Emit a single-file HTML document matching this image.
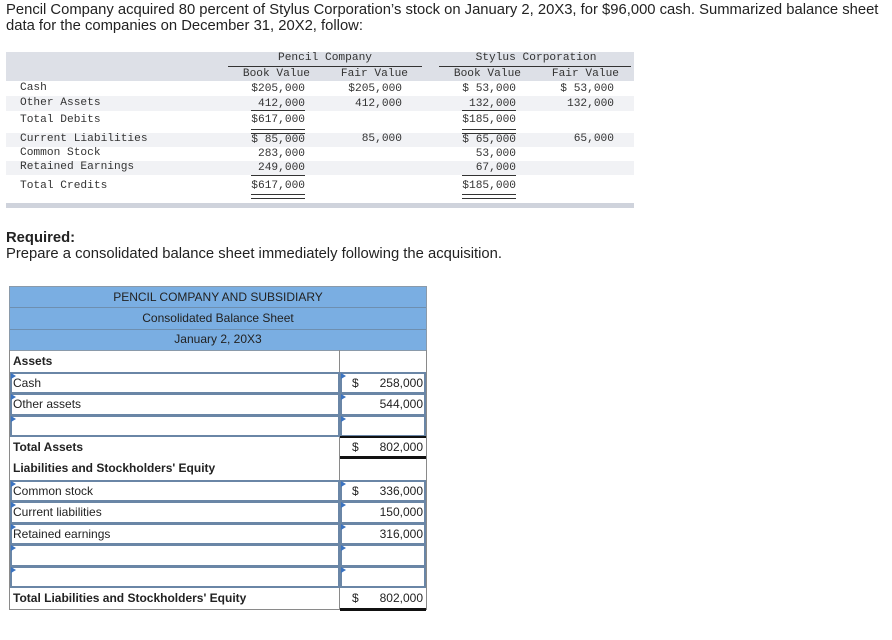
<!DOCTYPE html>
<html><head><style>
body{margin:0;width:892px;height:640px;background:#fff;position:relative;overflow:hidden;font-family:"Liberation Sans",Arial,sans-serif;color:#222}
.a{position:absolute;white-space:nowrap}
.m{font-family:"Liberation Mono",monospace;font-size:11.2px;color:#333}
.r{text-align:right}
.t{font-size:14.8px}
.b{font-size:12px}
.cell{position:absolute;box-sizing:border-box}
.inp{border:2px solid #6a86a6;background:#fff}
.tri{position:absolute;width:0;height:0;border-top:3px solid transparent;border-bottom:3px solid transparent;border-left:5px solid #3b73c0}
</style></head><body>
<div class="a t" style="left:6px;top:2px">Pencil Company acquired 80 percent of Stylus Corporation’s stock on January 2, 20X3, for $96,000 cash. Summarized balance sheet</div>
<div class="a t" style="left:6px;top:18px">data for the companies on December 31, 20X2, follow:</div>

<div class="a" style="left:6px;top:52px;width:628px;height:29px;background:#dde0e7"></div>
<div class="a" style="left:6px;top:96px;width:628px;height:15px;background:#f1f2f5"></div>
<div class="a" style="left:6px;top:133px;width:628px;height:14px;background:#f1f2f5"></div>
<div class="a" style="left:6px;top:161px;width:628px;height:14px;background:#f1f2f5"></div>
<div class="a" style="left:6px;top:203px;width:628px;height:5px;background:#cfd3dc"></div>
<div class="a m" style="left:228px;top:52px;width:194px;text-align:center">Pencil Company</div>
<div class="a m" style="left:439px;top:52px;width:194px;text-align:center">Stylus Corporation</div>
<div class="a" style="left:228px;top:66px;width:194px;height:1px;background:#333"></div>
<div class="a" style="left:439px;top:66px;width:192px;height:1px;background:#333"></div>
<div class="a m r" style="left:205px;width:105px;top:68px">Book Value</div>
<div class="a m r" style="left:303px;width:105px;top:68px">Fair Value</div>
<div class="a m r" style="left:416px;width:105px;top:68px">Book Value</div>
<div class="a m r" style="left:514px;width:105px;top:68px">Fair Value</div>

<div class="a m" style="left:20px;top:82px">Cash</div>
<div class="a m" style="left:20px;top:97px">Other Assets</div>
<div class="a m" style="left:20px;top:114px">Total Debits</div>
<div class="a m" style="left:20px;top:133px">Current Liabilities</div>
<div class="a m" style="left:20px;top:147px">Common Stock</div>
<div class="a m" style="left:20px;top:161px">Retained Earnings</div>
<div class="a m" style="left:20px;top:180px">Total Credits</div>

<div class="a m r" style="left:205px;width:100px;top:82px;line-height:15px">$205,000<br>412,000</div>
<div class="a m r" style="left:205px;width:100px;top:114px">$617,000</div>
<div class="a m r" style="left:205px;width:100px;top:133px;line-height:14px">$ 85,000<br>283,000<br>249,000</div>
<div class="a m r" style="left:205px;width:100px;top:180px">$617,000</div>
<div class="a m r" style="left:302px;width:100px;top:82px;line-height:15px">$205,000<br>412,000</div>
<div class="a m r" style="left:302px;width:100px;top:133px">85,000</div>
<div class="a m r" style="left:416px;width:100px;top:82px;line-height:15px">$ 53,000<br>132,000</div>
<div class="a m r" style="left:416px;width:100px;top:114px">$185,000</div>
<div class="a m r" style="left:416px;width:100px;top:133px;line-height:14px">$ 65,000<br>53,000<br>67,000</div>
<div class="a m r" style="left:416px;width:100px;top:180px">$185,000</div>
<div class="a m r" style="left:514px;width:100px;top:82px;line-height:15px">$ 53,000<br>132,000</div>
<div class="a m r" style="left:514px;width:100px;top:133px">65,000</div>
<div class="a" style="left:251px;top:110px;width:54px;height:1px;background:#333"></div>
<div class="a" style="left:251px;top:129px;width:54px;height:3px;border-top:1px solid #333;border-bottom:1px solid #333"></div>
<div class="a" style="left:251px;top:175px;width:54px;height:1px;background:#333"></div>
<div class="a" style="left:251px;top:194px;width:54px;height:3px;border-top:1px solid #333;border-bottom:1px solid #333"></div>
<div class="a" style="left:462px;top:110px;width:54px;height:1px;background:#333"></div>
<div class="a" style="left:462px;top:129px;width:54px;height:3px;border-top:1px solid #333;border-bottom:1px solid #333"></div>
<div class="a" style="left:462px;top:175px;width:54px;height:1px;background:#333"></div>
<div class="a" style="left:462px;top:194px;width:54px;height:3px;border-top:1px solid #333;border-bottom:1px solid #333"></div>

<div class="a t" style="left:6px;top:230px;font-weight:bold">Required:</div>
<div class="a t" style="left:6px;top:246px">Prepare a consolidated balance sheet immediately following the acquisition.</div>

<div class="cell" style="left:9px;top:286px;width:418px;height:65px;background:#7aaee2;border:1px solid #8a9aaa"></div>
<div class="a" style="left:10px;top:307px;width:416px;height:1px;background:#6e8fb0"></div>
<div class="a" style="left:10px;top:329px;width:416px;height:1px;background:#6e8fb0"></div>
<div class="a b" style="left:10px;top:290px;width:416px;text-align:center">PENCIL COMPANY AND SUBSIDIARY</div>
<div class="a b" style="left:10px;top:311px;width:416px;text-align:center">Consolidated Balance Sheet</div>
<div class="a b" style="left:10px;top:332px;width:416px;text-align:center">January 2, 20X3</div>
<div class="cell" style="left:9px;top:350px;width:418px;height:260px;border:1px solid #8a8a8a;border-top:none"></div>
<div class="a" style="left:339px;top:350px;width:1px;height:260px;background:#8a8a8a"></div>

<div class="a b" style="left:13px;top:354px;font-weight:bold">Assets</div>
<div class="a b" style="left:13px;top:440px;font-weight:bold">Total Assets</div>
<div class="a b" style="left:13px;top:461px;font-weight:bold">Liabilities and Stockholders' Equity</div>
<div class="a b" style="left:13px;top:591px;font-weight:bold">Total Liabilities and Stockholders' Equity</div>

<div class="cell inp" style="left:10px;top:372px;width:330px;height:22px"></div><div class="cell inp" style="left:340px;top:372px;width:86px;height:22px"></div>
<div class="cell inp" style="left:10px;top:393px;width:330px;height:23px"></div><div class="cell inp" style="left:340px;top:393px;width:86px;height:23px"></div>
<div class="cell inp" style="left:10px;top:415px;width:330px;height:22px"></div><div class="cell inp" style="left:340px;top:415px;width:86px;height:22px"></div>
<div class="cell inp" style="left:10px;top:480px;width:330px;height:22px"></div><div class="cell inp" style="left:340px;top:480px;width:86px;height:22px"></div>
<div class="cell inp" style="left:10px;top:501px;width:330px;height:23px"></div><div class="cell inp" style="left:340px;top:501px;width:86px;height:23px"></div>
<div class="cell inp" style="left:10px;top:523px;width:330px;height:22px"></div><div class="cell inp" style="left:340px;top:523px;width:86px;height:22px"></div>
<div class="cell inp" style="left:10px;top:544px;width:330px;height:23px"></div><div class="cell inp" style="left:340px;top:544px;width:86px;height:23px"></div>
<div class="cell inp" style="left:10px;top:566px;width:330px;height:22px"></div><div class="cell inp" style="left:340px;top:566px;width:86px;height:22px"></div>
<div class="tri" style="left:11px;top:373px"></div><div class="tri" style="left:341px;top:373px"></div>
<div class="tri" style="left:11px;top:394px"></div><div class="tri" style="left:341px;top:394px"></div>
<div class="tri" style="left:11px;top:416px"></div><div class="tri" style="left:341px;top:416px"></div>
<div class="tri" style="left:11px;top:481px"></div><div class="tri" style="left:341px;top:481px"></div>
<div class="tri" style="left:11px;top:502px"></div><div class="tri" style="left:341px;top:502px"></div>
<div class="tri" style="left:11px;top:524px"></div><div class="tri" style="left:341px;top:524px"></div>
<div class="tri" style="left:11px;top:545px"></div><div class="tri" style="left:341px;top:545px"></div>
<div class="tri" style="left:11px;top:567px"></div><div class="tri" style="left:341px;top:567px"></div>
<div class="a" style="left:340px;top:436px;width:86px;height:2px;background:#111"></div>
<div class="a" style="left:340px;top:456px;width:86px;height:3px;background:#111"></div>
<div class="a" style="left:340px;top:608px;width:86px;height:3px;background:#111"></div>

<div class="a b" style="left:13px;top:376px">Cash</div>
<div class="a b" style="left:13px;top:397px">Other assets</div>
<div class="a b" style="left:13px;top:484px">Common stock</div>
<div class="a b" style="left:13px;top:505px">Current liabilities</div>
<div class="a b" style="left:13px;top:527px">Retained earnings</div>

<div class="a b" style="left:352px;top:376px">$</div>
<div class="a b" style="left:352px;top:440px">$</div>
<div class="a b" style="left:352px;top:484px">$</div>
<div class="a b" style="left:352px;top:591px">$</div>
<div class="a b r" style="left:340px;width:83px;top:376px">258,000</div>
<div class="a b r" style="left:340px;width:83px;top:397px">544,000</div>
<div class="a b r" style="left:340px;width:83px;top:440px">802,000</div>
<div class="a b r" style="left:340px;width:83px;top:484px">336,000</div>
<div class="a b r" style="left:340px;width:83px;top:505px">150,000</div>
<div class="a b r" style="left:340px;width:83px;top:527px">316,000</div>
<div class="a b r" style="left:340px;width:83px;top:591px">802,000</div>
</body></html>
